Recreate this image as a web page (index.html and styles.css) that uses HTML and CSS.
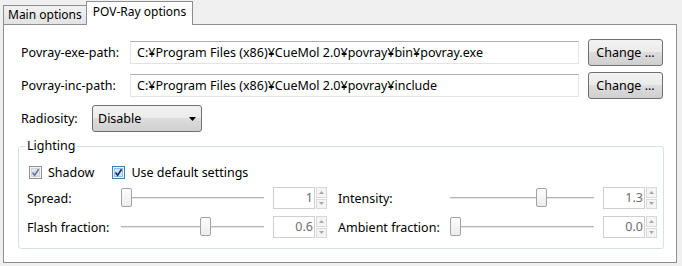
FILE: index.html
```html
<!DOCTYPE html>
<html lang="en">
<head>
  <meta charset="UTF-8">
  <title>POV-Ray options</title>
  <link rel="stylesheet" href="styles.css">
</head>
<body>
  <div class="tabs">
    <div class="tab">Main options</div>
    <div class="tab active">POV-Ray options</div>
  </div>
  <div class="panel">
    <div class="path-grid">
      <label class="lbl">Povray-exe-path:</label>
      <input class="path" type="text" value="C:¥Program Files (x86)¥CueMol 2.0¥povray¥bin¥povray.exe">
      <button class="btn">Change ...</button>
      <label class="lbl">Povray-inc-path:</label>
      <input class="path" type="text" value="C:¥Program Files (x86)¥CueMol 2.0¥povray¥include">
      <button class="btn">Change ...</button>
    </div>
    <div class="radio-row">
      <label class="lbl radio-lbl">Radiosity:</label>
      <div class="combo">
        <span>Disable</span>
        <svg width="7" height="4" viewBox="0 0 7 4"><polygon points="0,0 7,0 3.5,4" fill="#000"/></svg>
      </div>
    </div>
    <fieldset class="group">
      <legend>Lighting</legend>
      <div class="checks">
        <label class="check">
          <svg width="13" height="13" viewBox="0 0 13 13">
            <rect x="0.5" y="0.5" width="12" height="12" fill="#f6f6f6" stroke="#8e8f8f"/>
            <rect x="2.5" y="2.5" width="8" height="8" fill="#e4e4e4" stroke="#d2d2d2"/>
            <path d="M3.5 6.5 L5.6 9.3 L9.6 3.2" fill="none" stroke="#6677a0" stroke-width="1.6"/>
          </svg>
          Shadow
        </label>
        <label class="check">
          <svg width="13" height="13" viewBox="0 0 13 13">
            <rect x="0.5" y="0.5" width="12" height="12" fill="#eef6fc" stroke="#3c7fb1"/>
            <rect x="2.5" y="2.5" width="8" height="8" fill="#cfe5f6" stroke="#8fbfe0"/>
            <path d="M3.5 6.5 L5.6 9.3 L9.6 3.2" fill="none" stroke="#1c2f6e" stroke-width="1.6"/>
          </svg>
          Use default settings
        </label>
      </div>
      <div class="sliders">
        <span class="lbl">Spread:</span>
        <div class="slider"><div class="track"></div><div class="thumb" style="left: calc((100% - 11px) * 0)"></div></div>
        <div class="spin"><span class="spin-val">1</span><div class="arrows"><div class="arrow"><svg width="5" height="3" viewBox="0 0 5 3"><polygon points="0,3 5,3 2.5,0" fill="#a8a8a8"/></svg></div><div class="arrow"><svg width="5" height="3" viewBox="0 0 5 3"><polygon points="0,0 5,0 2.5,3" fill="#a8a8a8"/></svg></div></div></div>
        <span class="lbl right">Intensity:</span>
        <div class="slider"><div class="track"></div><div class="thumb" style="left: calc((100% - 11px) * 0.65)"></div></div>
        <div class="spin"><span class="spin-val">1.3</span><div class="arrows"><div class="arrow"><svg width="5" height="3" viewBox="0 0 5 3"><polygon points="0,3 5,3 2.5,0" fill="#a8a8a8"/></svg></div><div class="arrow"><svg width="5" height="3" viewBox="0 0 5 3"><polygon points="0,0 5,0 2.5,3" fill="#a8a8a8"/></svg></div></div></div>

        <span class="lbl">Flash fraction:</span>
        <div class="slider"><div class="track"></div><div class="thumb" style="left: calc((100% - 11px) * 0.6)"></div></div>
        <div class="spin"><span class="spin-val">0.6</span><div class="arrows"><div class="arrow"><svg width="5" height="3" viewBox="0 0 5 3"><polygon points="0,3 5,3 2.5,0" fill="#a8a8a8"/></svg></div><div class="arrow"><svg width="5" height="3" viewBox="0 0 5 3"><polygon points="0,0 5,0 2.5,3" fill="#a8a8a8"/></svg></div></div></div>
        <span class="lbl right">Ambient fraction:</span>
        <div class="slider"><div class="track"></div><div class="thumb" style="left: calc((100% - 11px) * 0)"></div></div>
        <div class="spin"><span class="spin-val">0.0</span><div class="arrows"><div class="arrow"><svg width="5" height="3" viewBox="0 0 5 3"><polygon points="0,3 5,3 2.5,0" fill="#a8a8a8"/></svg></div><div class="arrow"><svg width="5" height="3" viewBox="0 0 5 3"><polygon points="0,0 5,0 2.5,3" fill="#a8a8a8"/></svg></div></div></div>
      </div>
    </fieldset>
  </div>
</body>
</html>
```

FILE: styles.css
```css
body {
  margin: 0;
  background: #f0f0f0;
  font-family: "Noto Sans", sans-serif;
  font-size: 12.5px;
  color: #000;
  width: 682px;
  height: 266px;
  overflow: hidden;
}
.tabs {
  display: flex;
  align-items: flex-end;
  height: 24px;
  padding-left: 3px;
}
.tab {
  height: 19px;
  box-sizing: border-box;
  padding: 0 4px;
  border: 1px solid #8c8e94;
  border-bottom: none;
  border-right: none;
  background: linear-gradient(#f2f2f2, #e3e3e3);
  line-height: 18px;
  font-size: 12px;
}
.tab.active {
  height: 24px;
  margin-bottom: -1px;
  position: relative;
  z-index: 1;
  padding: 0 6px;
  border-right: 1px solid #8c8e94;
  background: #fff;
  line-height: 20px;
}
.panel {
  height: 239px;
  box-sizing: border-box;
  margin: 0 5px 0 3px;
  border: 1px solid #8c8e94;
  background: #fff;
  padding: 14px 13px 0 17px;
}
.lbl {
  white-space: nowrap;
}
.path-grid {
  display: grid;
  grid-template-columns: 100px 449px 75px;
  column-gap: 9px;
  row-gap: 6px;
  grid-auto-rows: 27px;
  align-items: center;
}
.path {
  height: 23px;
  box-sizing: border-box;
  margin: 0;
  padding: 0 6px;
  border: 1px solid #e2e3ea;
  border-top-color: #abadb3;
  font: inherit;
  color: #000;
  outline: none;
}
.btn {
  height: 27px;
  margin: 0;
  padding: 0;
  border: 1px solid #707070;
  border-radius: 3px;
  background: linear-gradient(#f2f2f2 0%, #ebebeb 50%, #dddddd 50%, #cfcfcf 100%);
  font: inherit;
  color: #000;
}
.radio-row {
  display: flex;
  align-items: center;
  height: 27px;
  margin-top: 6px;
}
.radio-lbl {
  width: 71px;
}
.combo {
  width: 110px;
  height: 27px;
  box-sizing: border-box;
  display: flex;
  align-items: center;
  justify-content: space-between;
  padding: 0 5px;
  border: 1px solid #707070;
  border-radius: 3px;
  background: linear-gradient(#f2f2f2 0%, #ebebeb 50%, #dddddd 50%, #cfcfcf 100%);
}
.group {
  margin: 6px 12px 0 -3px;
  padding: 10px 6px 10px 8px;
  border: 1px solid #d5dfe5;
  border-radius: 3px;
}
.group legend {
  padding: 0 2px;
  margin-left: -2px;
  line-height: 16px;
}
.checks {
  display: flex;
  gap: 18px;
  height: 16px;
  align-items: center;
  padding-left: 2px;
}
.check {
  display: flex;
  align-items: center;
  gap: 6px;
}
.check svg {
  display: block;
}
.sliders {
  display: grid;
  grid-template-columns: 85px 143px 54px 105px 144px 54px;
  column-gap: 9px;
  grid-auto-rows: 22px;
  row-gap: 7px;
  margin-top: 7px;
  align-items: center;
}
.lbl.right {
  margin-left: 2px;
}
.slider {
  position: relative;
  height: 22px;
}
.track {
  position: absolute;
  left: 0;
  right: 0;
  top: 10px;
  height: 1px;
  background: #b4b4b4;
  border-bottom: 1px solid #e6e6e6;
}
.thumb {
  position: absolute;
  top: 1px;
  width: 11px;
  height: 19px;
  box-sizing: border-box;
  border: 1px solid #a3a3a3;
  border-radius: 2px;
  background: linear-gradient(#fdfdfd, #ececec);
}
.spin {
  display: flex;
  height: 22px;
}
.spin-val {
  width: 42px;
  box-sizing: border-box;
  border: 1px solid #cfcfcf;
  text-align: right;
  padding-right: 1px;
  line-height: 20px;
  color: #6d6d6d;
}
.arrows {
  display: flex;
  flex-direction: column;
  gap: 1px;
  width: 12px;
  padding-left: 1px;
  box-sizing: border-box;
}
.arrow {
  flex: 1;
  display: flex;
  align-items: center;
  justify-content: center;
  border: 1px solid #d9d9d9;
  background: #f4f4f4;
}
.arrow svg {
  display: block;
}
```
